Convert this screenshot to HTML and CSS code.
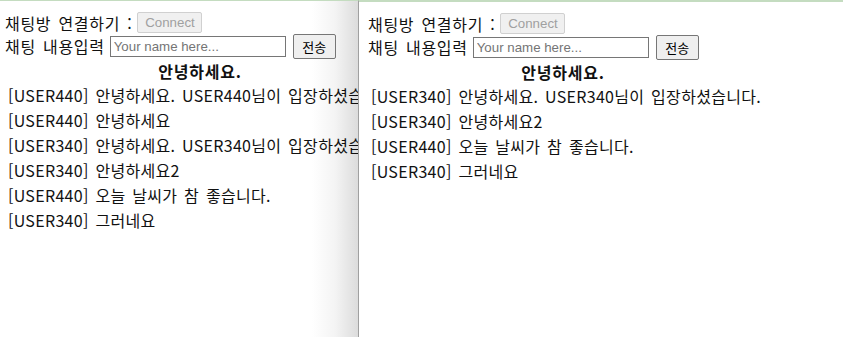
FILE: index.html
```html
<!DOCTYPE html>
<html lang="ko">
<head>
    <meta charset="UTF-8">
    <title>채팅</title>
    <link rel="stylesheet" href="styles.css">
</head>
<body>
    <div class="screen">
        <div class="pane pane-left">
            <div class="row row-connect">채팅방 연결하기 : <button class="btn btn-connect" disabled>Connect</button></div>
            <div class="row row-send">채팅 내용입력 <input type="text" class="name-input" placeholder="Your name here..."><button class="btn btn-send">전송</button></div>
            <div class="chat">
                <div class="chat-title">안녕하세요.</div>
                <div class="msg">[USER440] 안녕하세요. USER440님이 입장하셨습니다.</div>
                <div class="msg">[USER440] 안녕하세요</div>
                <div class="msg">[USER340] 안녕하세요. USER340님이 입장하셨습니다.</div>
                <div class="msg">[USER340] 안녕하세요2</div>
                <div class="msg">[USER440] 오늘 날씨가 참 좋습니다.</div>
                <div class="msg">[USER340] 그러네요</div>
            </div>
        </div>
        <div class="pane pane-right">
            <div class="row row-connect">채팅방 연결하기 : <button class="btn btn-connect" disabled>Connect</button></div>
            <div class="row row-send">채팅 내용입력 <input type="text" class="name-input" placeholder="Your name here..."><button class="btn btn-send">전송</button></div>
            <div class="chat">
                <div class="chat-title">안녕하세요.</div>
                <div class="msg">[USER340] 안녕하세요. USER340님이 입장하셨습니다.</div>
                <div class="msg">[USER340] 안녕하세요2</div>
                <div class="msg">[USER440] 오늘 날씨가 참 좋습니다.</div>
                <div class="msg">[USER340] 그러네요</div>
            </div>
        </div>
    </div>
</body>
</html>
```

FILE: styles.css
```css
html, body {
    margin: 0;
    height: 100%;
    background: #fff;
}
body {
    font-family: 'Noto Sans CJK KR', 'Noto Sans', sans-serif;
    font-size: 16px;
    letter-spacing: 0.3px;
    word-spacing: 2px;
    color: #111;
    overflow: hidden;
}
.screen {
    display: flex;
    height: 337px;
}
.pane {
    overflow: hidden;
    white-space: nowrap;
    padding-top: 10px;
    border-top: 2px solid #c4dcc0;
    box-sizing: border-box;
}
.pane-left {
    width: 359px;
    flex: none;
    padding-left: 5px;
    border-right: 1px solid #a0a0a0;
    border-top-width: 1px;
    background: linear-gradient(to right, #fff 0, #fff 312px, #f4f4f4 335px, #dcdcdc 358px);
}
.pane-right {
    flex: 1;
    padding-left: 9px;
}
.row {
    display: flex;
    align-items: center;
    letter-spacing: 0.7px;
}
.row-connect {
    height: 23px;
    gap: 5px;
}
.row-send {
    height: 24px;
    gap: 5px;
}
.btn {
    font-family: 'Liberation Sans', Arial, sans-serif;
    font-size: 13.3px;
    letter-spacing: 0;
    box-sizing: border-box;
    padding: 0;
    border: 1px solid #767676;
    border-radius: 2px;
    background: #efefef;
    color: #000;
}
.btn-connect {
    width: 65px;
    height: 21px;
}
.btn:disabled {
    color: #a0a0a0;
    border-color: #d0d0d0;
    background: #f0f0f0;
}
.btn-send {
    font-family: 'Noto Sans CJK KR', sans-serif;
    font-size: 13px;
    width: 43px;
    height: 25px;
    margin-left: 2px;
}
.name-input {
    font-family: 'Liberation Sans', Arial, sans-serif;
    font-size: 13.3px;
    letter-spacing: 0;
    width: 176px;
    height: 21px;
    box-sizing: border-box;
    padding: 1px 3px;
    border: 1px solid #767676;
    border-radius: 0;
    margin: 0;
}
.name-input::placeholder {
    color: #757575;
}
.chat {
    width: 390px;
    padding-top: 1px;
}
.chat-title {
    text-align: center;
    font-weight: bold;
    letter-spacing: 0.8px;
    line-height: 24px;
}
.msg {
    padding-left: 3px;
    line-height: 25px;
}
```
